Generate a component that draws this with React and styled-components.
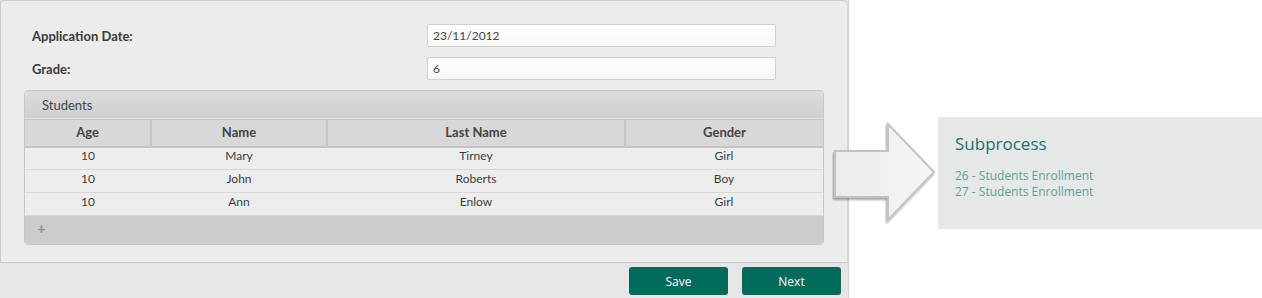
import React from "react";
import styled, { createGlobalStyle } from "styled-components";

const GlobalStyle = createGlobalStyle`
	html, body {
		margin: 0;
		padding: 0;
		background: #ffffff;
	}
	* {
		box-sizing: border-box;
	}
`;

const Page = styled.div`
	display: flex;
	width: 1262px;
	height: 298px;
	font-family: "Lato", "Liberation Sans", sans-serif;
	color: #333;
`;

const LeftColumn = styled.div`
	width: 849px;
	height: 298px;
	display: flex;
	flex-direction: column;
	background: #e6e6e6;
	border-right: 1px solid #d2d2d2;
`;

const FormPanel = styled.div`
	height: 263px;
	padding: 23px 23px 0 23px;
	background: #ececec;
	border: 1px solid #cbcbcb;
	border-right-color: #d6d6d6;
	border-radius: 3px 6px 0 0;
	display: flex;
	flex-direction: column;
	gap: 10px;
`;

const FieldRow = styled.div`
	display: grid;
	grid-template-columns: 403px 349px;
	align-items: center;
	height: 23px;
`;

const Label = styled.label`
	padding-left: 8px;
	font-size: 13px;
	font-weight: 700;
	color: #3a3a3a;
`;

const Input = styled.div`
	height: 23px;
	padding: 0 5px;
	display: flex;
	align-items: center;
	font-size: 12px;
	color: #444;
	background: linear-gradient(#ffffff, #f7f7f7);
	border: 1px solid #d0d0d0;
	border-radius: 2px;
`;

const Grid = styled.div`
	width: 800px;
	border-radius: 4px;
	overflow: hidden;
	border: 1px solid #c6c6c6;
	background: #ededed;
`;

const GridTitle = styled.div`
	height: 28px;
	padding-left: 17px;
	display: flex;
	align-items: center;
	font-size: 13px;
	color: #444;
	background: linear-gradient(#dcdcdc, #cfcfcf);
	border-bottom: 1px solid #e4e4e4;
`;

const Table = styled.table`
	width: 100%;
	border-collapse: collapse;
	table-layout: fixed;
`;

const HeadCell = styled.th`
	height: 27px;
	padding: 0 0 2px;
	font-size: 13px;
	font-weight: 700;
	color: #444;
	background: #d8d8d8;
	border: 2px solid #c4c4c4;
	border-top: 1px solid #c4c4c4;
	&:first-child {
		border-left: none;
	}
	&:last-child {
		border-right: none;
	}
`;

const Cell = styled.td`
	height: 23px;
	padding: 0 0 6px;
	text-align: center;
	font-size: 12px;
	color: #3c3c3c;
	border-bottom: 1px solid #d8d8d8;
`;

const GridFooter = styled.div`
	height: 28px;
	padding: 0 0 4px 12px;
	display: flex;
	align-items: center;
	font-size: 15px;
	font-weight: 700;
	color: #8e8e8e;
	background: #cccccc;
`;

const ButtonBar = styled.div`
	display: flex;
	justify-content: flex-end;
	gap: 14px;
	padding: 4px 7px 0 0;
`;

const Button = styled.button`
	width: 99px;
	height: 28px;
	border: none;
	border-radius: 3px;
	background: #006b5b;
	color: #ffffff;
	font-family: "Open Sans", "Liberation Sans", sans-serif;
	font-size: 12px;
	cursor: pointer;
`;

const ArrowBox = styled.div`
	width: 89px;
	padding-top: 122px;
	display: flex;
	justify-content: flex-end;
	svg {
		flex-shrink: 0;
	}
`;

const SubPanel = styled.div`
	width: 324px;
	height: 112px;
	margin-top: 117px;
	padding: 15px 17px;
	background: #e6e8e7;
	font-family: "Open Sans", "Liberation Sans", sans-serif;
`;

const SubTitle = styled.div`
	font-size: 17px;
	color: #17706d;
	margin-bottom: 13px;
`;

const SubLink = styled.a`
	display: block;
	font-size: 12px;
	line-height: 16px;
	color: #5e9f98;
	text-decoration: none;
`;

const students = [
	{ age: 10, name: "Mary", last: "Tirney", gender: "Girl" },
	{ age: 10, name: "John", last: "Roberts", gender: "Boy" },
	{ age: 10, name: "Ann", last: "Enlow", gender: "Girl" },
];

const columns = [
	{ title: "Age", width: 126 },
	{ title: "Name", width: 176 },
	{ title: "Last Name", width: 298 },
	{ title: "Gender", width: 198 },
];

function Arrow() {
	return (
		<svg width="106" height="102" viewBox="0 0 106 102">
			<defs>
				<linearGradient id="arrowFill" x1="0" y1="0" x2="1" y2="0">
					<stop offset="0" stopColor="#ececec" />
					<stop offset="1" stopColor="#f5f5f5" />
				</linearGradient>
				<filter id="arrowShadow" x="-10%" y="-10%" width="130%" height="130%">
					<feDropShadow dx="-1" dy="2" stdDeviation="1.2" floodColor="#000" floodOpacity="0.35" />
				</filter>
			</defs>
			<path
				d="M3 29 L56 29 L56 2 L102 50 L56 98 L56 75 L3 75 Z"
				fill="url(#arrowFill)"
				stroke="#c2c2c2"
				strokeWidth="2"
				strokeLinejoin="miter"
				filter="url(#arrowShadow)"
			/>
		</svg>
	);
}

export default function App() {
	return (
		<>
			<GlobalStyle />
			<Page>
				<LeftColumn>
					<FormPanel>
						<FieldRow>
							<Label>Application Date:</Label>
							<Input>23/11/2012</Input>
						</FieldRow>
						<FieldRow>
							<Label>Grade:</Label>
							<Input>6</Input>
						</FieldRow>
						<Grid>
							<GridTitle>Students</GridTitle>
							<Table>
								<colgroup>
									{columns.map((c) => (
										<col key={c.title} style={{ width: c.width }} />
									))}
								</colgroup>
								<thead>
									<tr>
										{columns.map((c) => (
											<HeadCell key={c.title}>{c.title}</HeadCell>
										))}
									</tr>
								</thead>
								<tbody>
									{students.map((s) => (
										<tr key={s.name}>
											<Cell>{s.age}</Cell>
											<Cell>{s.name}</Cell>
											<Cell>{s.last}</Cell>
											<Cell>{s.gender}</Cell>
										</tr>
									))}
								</tbody>
							</Table>
							<GridFooter>+</GridFooter>
						</Grid>
					</FormPanel>
					<ButtonBar>
						<Button>Save</Button>
						<Button>Next</Button>
					</ButtonBar>
				</LeftColumn>
				<ArrowBox>
					<Arrow />
				</ArrowBox>
				<SubPanel>
					<SubTitle>Subprocess</SubTitle>
					<SubLink href="#">26 - Students Enrollment</SubLink>
					<SubLink href="#">27 - Students Enrollment</SubLink>
				</SubPanel>
			</Page>
		</>
	);
}
